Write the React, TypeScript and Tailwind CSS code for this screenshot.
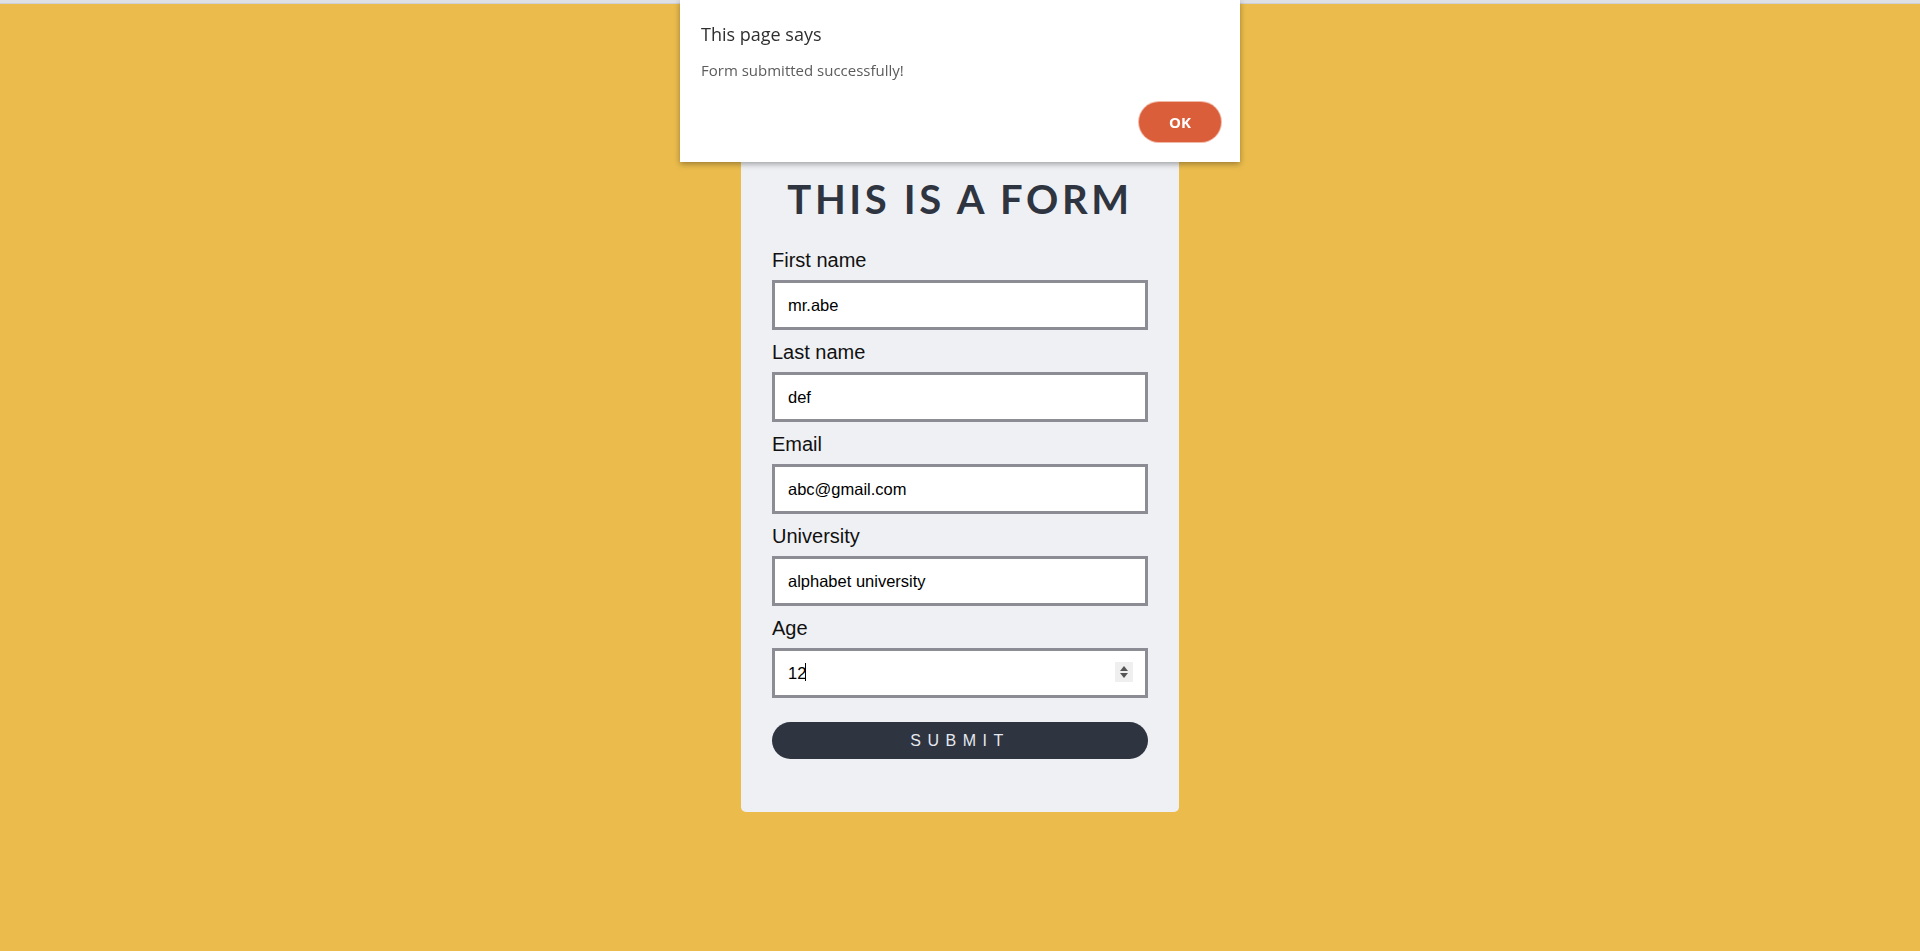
import React from 'react';

const fields = [
  { id: 'first', label: 'First name', value: 'mr.abe' },
  { id: 'last', label: 'Last name', value: 'def' },
  { id: 'email', label: 'Email', value: 'abc@gmail.com' },
  { id: 'uni', label: 'University', value: 'alphabet university' },
];

const AlertDialog: React.FC = () => (
  <div className="fixed top-0 left-[680px] w-[560px] h-[162px] bg-white shadow-[0_2px_6px_rgba(0,0,0,0.35)] z-20 font-['Open_Sans',sans-serif]">
    <div className="pl-[21px] pt-[21px] text-[18px] leading-[26px] text-[#2f2f2f]">This page says</div>
    <div className="pl-[21px] pt-[13px] text-[15px] leading-[20px] text-[#5c5c5c]">Form submitted successfully!</div>
    <div className="flex justify-end pr-[19px] pt-[22px]">
      <button className="w-[82px] h-[40px] rounded-full bg-[#db5e3b] text-white text-[15px] font-bold ring-1 ring-[#f1b9a8]">
        OK
      </button>
    </div>
  </div>
);

export default function App() {
  return (
    <div className="relative h-screen w-full bg-[#ebbc4c] flex items-center justify-center font-['Liberation_Sans',Arial,sans-serif]">
      <div className="absolute top-0 left-0 w-full h-[4px] bg-[#dfe0e3] border-b border-[#cfd0d3]" />
      <AlertDialog />

      <form className="w-[438px] bg-[#eff0f4] rounded-[5px] px-[31px] pt-[36px] pb-[53px]" onSubmit={(e) => e.preventDefault()}>
        <h1 className="text-center font-['Lato',sans-serif] font-bold text-[40px] leading-[48px] tracking-[0.09em] text-[#2e3440] mb-[26px]">
          THIS IS A FORM
        </h1>

        {fields.map((f) => (
          <div key={f.id} className="mb-[11px]">
            <label htmlFor={f.id} className="block text-[20px] leading-[23px] text-[#111] mb-[8px]">
              {f.label}
            </label>
            <input
              id={f.id}
              type="text"
              defaultValue={f.value}
              className="w-full h-[50px] bg-white border-[3px] border-[#8b8c94] px-[13px] text-[16.5px] text-black outline-none"
            />
          </div>
        ))}

        {/* Age, with the focused caret and the spin box */}
        <div className="mb-[24px]">
          <label htmlFor="age" className="block text-[20px] leading-[23px] text-[#111] mb-[8px]">
            Age
          </label>
          <div className="relative">
            <input
              id="age"
              type="text"
              defaultValue="12"
              className="w-full h-[50px] bg-white border-[3px] border-[#8b8c94] px-[13px] text-[16.5px] text-black outline-none"
            />
            <span className="absolute left-[33px] top-[15px] w-px h-[18px] bg-black" />
            <span className="absolute right-[15px] top-[14px] w-[18px] h-[20px] bg-[#efefef] flex flex-col items-center justify-center gap-[2px]">
              <svg width="8" height="5" viewBox="0 0 8 5"><path d="M4 0L8 5H0z" fill="#555" /></svg>
              <svg width="8" height="5" viewBox="0 0 8 5"><path d="M0 0h8L4 5z" fill="#555" /></svg>
            </span>
          </div>
        </div>

        <button
          type="submit"
          className="w-full h-[37px] rounded-full bg-[#2e3440] text-[#e5e9f0] text-[16px] tracking-[6.5px]"
        >
          SUBMIT
        </button>
      </form>
    </div>
  );
}
